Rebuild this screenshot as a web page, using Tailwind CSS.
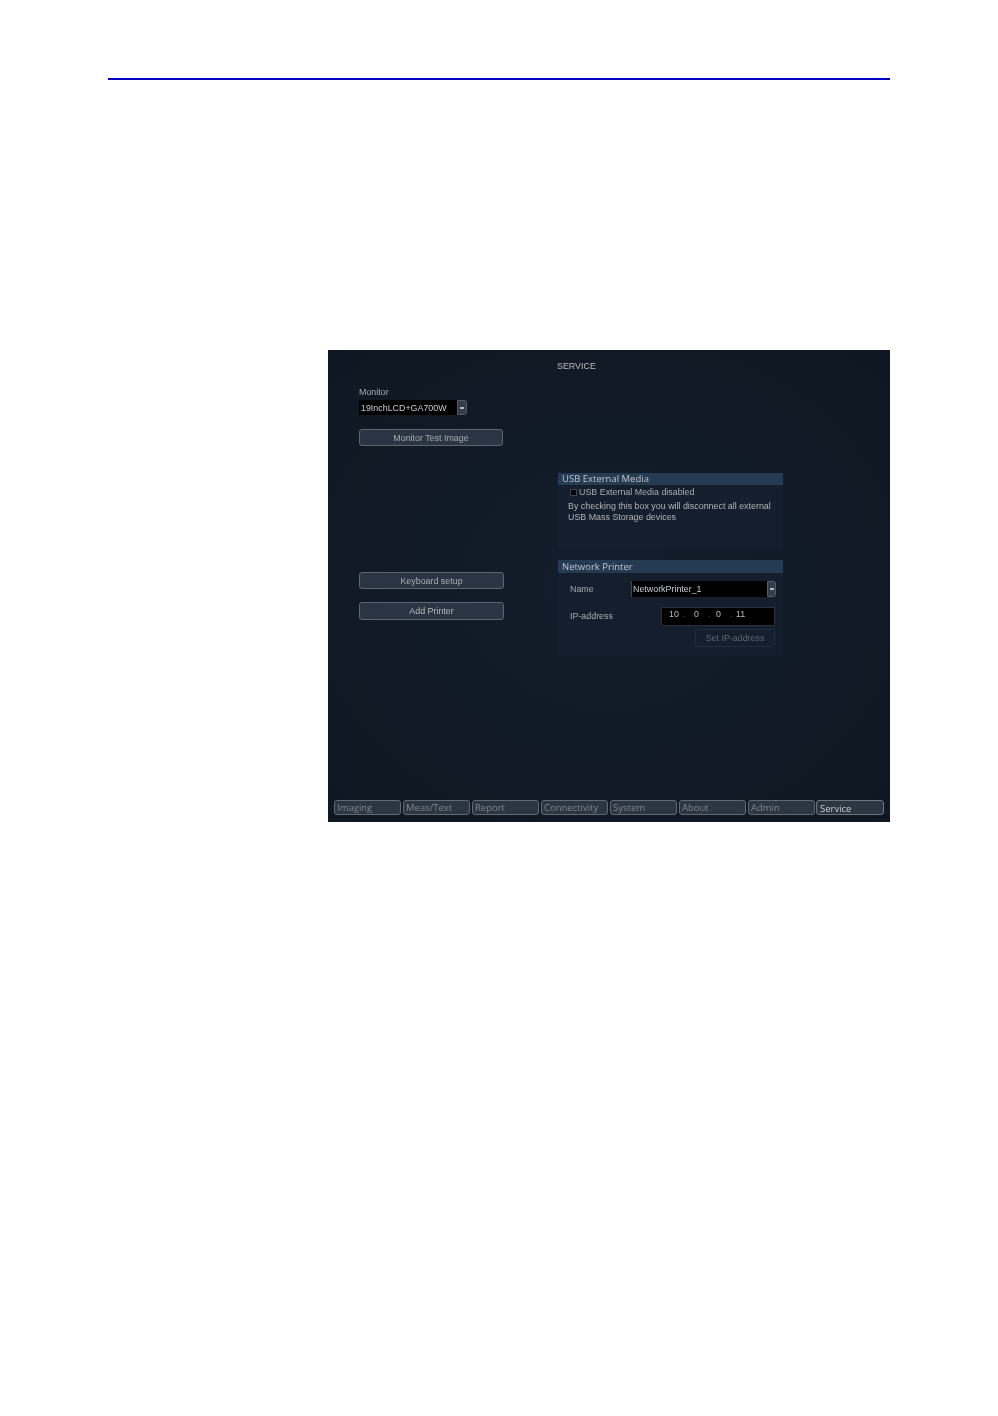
<!DOCTYPE html>
<html lang="en">
<head>
    <meta charset="UTF-8">
    <title>Service</title>
    <script src="https://cdn.jsdelivr.net/npm/@tailwindcss/browser@4"></script>
</head>
<body class="bg-white h-[1416px] font-['Liberation_Sans',sans-serif]">
    <div class="pt-[78px] pl-[108px] pr-[108px]">
        <div class="h-[2px] bg-[#0000c0]"></div>

        <!-- service screen -->
        <div class="mt-[270px] ml-[220px] w-[562px] h-[472px] flex flex-col bg-radial from-[#131d2b] to-[#0f1722] text-[8.9px] text-[#b8bbc0] blur-[0.4px]">
            <div class="h-[37px] pt-[10px] pl-[229px] leading-[12px]">SERVICE</div>

            <div class="flex-1 flex">
                <!-- left column -->
                <div class="w-[230px] pl-[31px] flex flex-col">
                    <div class="leading-[11px] text-[#a8acb2]">Monitor</div>
                    <div class="mt-[2px] w-[108px] h-[15px] flex">
                        <div class="flex-1 bg-black text-[#c8cbcf] pl-[2px] leading-[17px]">19InchLCD+GA700W</div>
                        <div class="w-[10px] bg-[#323c4a] rounded-r-[3px] border border-[#535c67] flex items-center justify-center">
                            <div class="w-[4px] h-[2px] bg-[#b4b8bd]"></div>
                        </div>
                    </div>
                    <button class="mt-[14px] w-[144px] h-[17px] rounded-[3px] bg-[#2a3442] border border-[#5c6570] text-[#a8acb2] text-center leading-[14px]">Monitor Test Image</button>
                    <button class="mt-[126px] w-[145px] h-[17px] rounded-[3px] bg-[#2a3442] border border-[#5c6570] text-[#a8acb2] text-center leading-[14px]">Keyboard setup</button>
                    <button class="mt-[13px] w-[145px] h-[18px] rounded-[3px] bg-[#2a3442] border border-[#5c6570] text-[#b8bbc0] text-center leading-[15px]">Add Printer</button>
                </div>

                <!-- right column -->
                <div class="w-[225px] pt-[86px] flex flex-col">
                    <div class="h-[12px] bg-[#253a53] pl-[4px] font-['Open_Sans',sans-serif] text-[9.5px] leading-[12px] text-[#c0c4c9]">USB External Media</div>
                    <div class="h-[63px] bg-[#141e2c]">
                        <div class="flex items-center pl-[12px] pt-[1px] h-[13px]">
                            <div class="w-[7px] h-[7px] border border-[#3d444e] bg-black"></div>
                            <span class="ml-[2px] leading-[12px] text-[#a8acb2]">USB External Media disabled</span>
                        </div>
                        <p class="mt-[3px] pl-[10px] leading-[11px] text-[#b0b4b9]">By checking this box you will disconnect all external<br>USB Mass Storage devices</p>
                    </div>

                    <div class="mt-[12px] h-[13px] bg-[#253a53] pl-[4px] font-['Open_Sans',sans-serif] text-[9.5px] leading-[13px] text-[#c0c4c9]">Network Printer</div>
                    <div class="h-[83px] bg-[#141e2c] pl-[12px]">
                        <div class="flex items-center pt-[8px]">
                            <span class="w-[61px] text-[#a8acb2] leading-[15px]">Name</span>
                            <div class="w-[145px] h-[16px] flex border-l border-[#3a4a5c]">
                                <div class="flex-1 bg-black text-[#c8cbcf] pl-[1px] leading-[16px]">NetworkPrinter_1</div>
                                <div class="w-[9px] bg-[#323c4a] rounded-r-[3px] border border-[#535c67] flex items-center justify-center">
                                    <div class="w-[4px] h-[2px] bg-[#b4b8bd]"></div>
                                </div>
                            </div>
                        </div>
                        <div class="flex items-center mt-[10px]">
                            <span class="w-[91px] text-[#a8acb2] leading-[19px]">IP-address</span>
                            <div class="w-[114px] h-[19px] bg-black border border-[#2b323c] flex text-[#b8bbc0] leading-[12px] pl-[7px]">
                                <span class="w-[14px]">10</span>
                                <span class="w-[11px] text-[#5a5f66]">.</span>
                                <span class="w-[14px]">0</span>
                                <span class="w-[8px] text-[#5a5f66]">.</span>
                                <span class="w-[14px]">0</span>
                                <span class="w-[6px] text-[#5a5f66]">.</span>
                                <span>11</span>
                            </div>
                        </div>
                        <div class="flex justify-end pr-[8px] mt-[3px]">
                            <div class="w-[80px] h-[18px] rounded-[3px] border border-[#232c38] text-[#5f6670] text-center leading-[16px]">Set IP-address</div>
                        </div>
                    </div>
                </div>
            </div>

            <!-- tabs -->
            <div class="h-[22px] pl-[6px] flex gap-[2px] font-['Open_Sans',sans-serif] text-[9.5px] text-[#7f858d] leading-[14px]">
                <div class="w-[67px] h-[15px] pl-[2px] bg-[#2c3642] border border-[#5f6873] rounded-[3px]">Imaging</div>
                <div class="w-[67px] h-[15px] pl-[2px] bg-[#2c3642] border border-[#5f6873] rounded-[3px]">Meas/Text</div>
                <div class="w-[67px] h-[15px] pl-[2px] bg-[#2c3642] border border-[#5f6873] rounded-[3px]">Report</div>
                <div class="w-[67px] h-[15px] pl-[2px] bg-[#2c3642] border border-[#5f6873] rounded-[3px]">Connectivity</div>
                <div class="w-[67px] h-[15px] pl-[2px] bg-[#2c3642] border border-[#5f6873] rounded-[3px]">System</div>
                <div class="w-[67px] h-[15px] pl-[2px] bg-[#2c3642] border border-[#5f6873] rounded-[3px]">About</div>
                <div class="w-[67px] h-[15px] pl-[2px] bg-[#2c3642] border border-[#5f6873] rounded-[3px]">Admin</div>
                <div class="-ml-[1px] w-[68px] h-[15px] pl-[3px] bg-[#2c3642] border border-[#6c747e] rounded-[3px] text-[#c8cbcf] font-medium leading-[15px]">Service</div>
            </div>
        </div>
    </div>
</body>
</html>
